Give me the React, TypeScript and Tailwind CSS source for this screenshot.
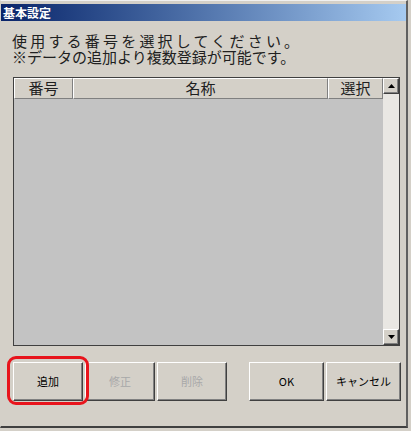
import React from 'react';

const jp = "font-['Noto_Sans_CJK_JP','Noto_Sans',sans-serif]";

const Btn: React.FC<{ label: string; disabled?: boolean; w: string }> = ({ label, disabled, w }) => (
  <div
    className={`${w} h-[39px] flex items-center justify-center bg-[#d4d0c8] border border-t-white border-l-white border-r-[#404040] border-b-[#404040] shadow-[inset_-1px_-1px_0_#808080] text-[11px] ${
      disabled ? 'text-[#a8a8a8]' : 'text-black'
    }`}
  >
    {label}
  </div>
);

export default function App() {
  return (
    <div className={`w-[411px] h-[431px] bg-[#d4d0c8] overflow-hidden ${jp}`}>
      <div className="h-[428px] w-[408px] border-t border-l border-t-[#f0f0f0] border-l-[#d4d0c8] border-r-2 border-b-2 border-r-[#606060] border-b-[#404040] pt-[3px]">
        {/* title bar */}
        <div className="h-[17px] bg-gradient-to-r from-[#0a246a] to-[#a6caf0] flex items-center pl-[2px]">
          <span className="text-white text-[12px] font-bold leading-none">基本設定</span>
        </div>

        {/* message */}
        <div className="pl-[11px] pt-[12px] text-[15px] leading-[16px] text-[#202020]">
          <div className="tracking-[3.2px]">使用する番号を選択してください。</div>
          <div>※データの追加より複数登録が可能です。</div>
        </div>

        {/* list */}
        <div className="ml-[12px] mt-[12px] w-[387px] h-[269px] border border-[#404040] flex bg-[#c3c3c3]">
          <div className="flex-1 flex flex-col">
            <div className="flex h-[21px] text-[15px] text-[#202020]">
              <div className="w-[59px] flex items-center justify-center bg-[#d4d0c8] border border-t-white border-l-white border-r-[#808080] border-b-[#808080]">番号</div>
              <div className="w-[255px] flex items-center justify-center bg-[#d4d0c8] border border-t-white border-l-white border-r-[#808080] border-b-[#808080]">名称</div>
              <div className="flex-1 flex items-center justify-center bg-[#d4d0c8] border border-t-white border-l-white border-r-[#808080] border-b-[#808080]">選択</div>
            </div>
            <div className="flex-1 bg-[#c3c3c3]" />
          </div>
          {/* scrollbar */}
          <div className="w-[16px] flex flex-col bg-[#e9e7e3]">
            <div className="h-[16px] flex items-center justify-center bg-[#d4d0c8] border border-t-white border-l-white border-r-[#404040] border-b-[#404040] shadow-[inset_-1px_-1px_0_#808080]">
              <svg width="7" height="4" viewBox="0 0 7 4"><path d="M3.5 0 L7 4 L0 4 Z" fill="#000" /></svg>
            </div>
            <div className="flex-1" />
            <div className="h-[16px] flex items-center justify-center bg-[#d4d0c8] border border-t-white border-l-white border-r-[#404040] border-b-[#404040] shadow-[inset_-1px_-1px_0_#808080]">
              <svg width="7" height="4" viewBox="0 0 7 4"><path d="M0 0 L7 0 L3.5 4 Z" fill="#000" /></svg>
            </div>
          </div>
        </div>

        {/* buttons */}
        <div className="flex pl-[12px] mt-[16px]">
          <div className="relative">
            <Btn label="追加" w="w-[70px]" />
            <div className="absolute -left-[6px] -top-[6px] -right-[6px] -bottom-[4px] border-[3px] border-[#e8141c] rounded-[9px]" />
          </div>
          <div className="ml-[2px]"><Btn label="修正" disabled w="w-[70px]" /></div>
          <div className="ml-[2px]"><Btn label="削除" disabled w="w-[70px]" /></div>
          <div className="ml-[22px]"><Btn label="OK" w="w-[75px]" /></div>
          <div className="ml-[2px]"><Btn label="キャンセル" w="w-[75px]" /></div>
        </div>
      </div>
    </div>
  );
}
